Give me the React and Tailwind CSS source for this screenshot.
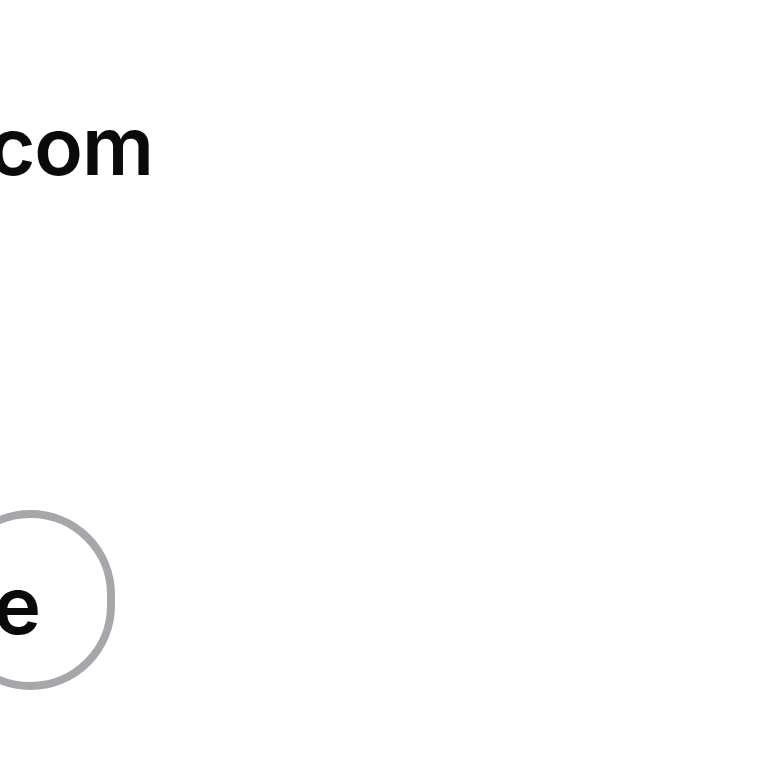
export default function App() {
  return (
    <div className="w-[768px] h-[768px] overflow-hidden bg-white text-[#0a0a0a]" style={{ fontFamily: "Inter, 'Liberation Sans', sans-serif" }}>
      <div className="pt-[106px] w-[153px] flex justify-end">
        <div className="shrink-0 whitespace-nowrap text-[80px] leading-none font-semibold tracking-[-1px]">com</div>
      </div>
      <div className="mt-[324px] w-[115px] flex justify-end">
        <div className="shrink-0 h-[180px] rounded-full border-[8px] border-[#a6a6ab] flex items-center pl-[40px] pr-[67px] pt-[10px]">
          <span className="whitespace-nowrap text-[80px] leading-none font-semibold tracking-[-1px]">e</span>
        </div>
      </div>
    </div>
  );
}
